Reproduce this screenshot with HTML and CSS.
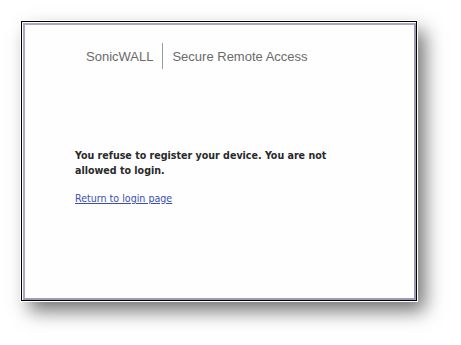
FILE: index.html
```html
<!DOCTYPE html>
<html lang="en">
<head>
    <meta charset="UTF-8">
    <title>SonicWALL - Secure Remote Access</title>
    <link rel="stylesheet" href="styles.css">
</head>
<body>
    <div class="window">
        <div class="pane">
            <div class="brand">
                <span class="brand-name">SonicWALL</span>
                <span class="brand-sep"></span>
                <span class="brand-product">Secure Remote Access</span>
            </div>
            <div class="message">
                <p class="notice">You refuse to register your device. You are not allowed to login.</p>
                <a class="back-link" href="#">Return to login page</a>
            </div>
        </div>
    </div>
</body>
</html>
```

FILE: styles.css
```css
html {
    height: 100%;
}
body {
    margin: 0;
    min-height: 100%;
    box-sizing: border-box;
    padding: 21px 0 0 21px;
    background: #fff;
}
.window {
    width: 394px;
    height: 278px;
    border: 1px solid #000;
    background: #fff;
    box-shadow: 0 0 0 1px #fff, 8px 10px 18px rgba(0, 0, 0, 0.55);
}
.pane {
    height: 277px;
    box-sizing: border-box;
    margin-left: 1px;
    margin-top: 1px;
    border-left: 2px solid #a8a8c2;
    border-top: 2px solid #a8a8c2;
    border-right: 2px solid #9c9cb6;
    border-bottom: 2px solid #9c9cb6;
    background: #fefefe;
    padding: 18px 0 0 50px;
}
.brand {
    display: flex;
    align-items: center;
    gap: 9px;
    padding-left: 11px;
    font-family: "Liberation Sans", Arial, sans-serif;
    font-size: 13px;
    color: #6a6a6a;
}
.brand-sep {
    width: 1px;
    height: 26px;
    background: #9a9a9a;
}
.message {
    padding-top: 79px;
    font-family: "DejaVu Sans Condensed", "DejaVu Sans", sans-serif;
    font-size: 10.6px;
}
.notice {
    margin: 0;
    width: 270px;
    font-weight: bold;
    line-height: 15px;
    color: #2a2a2a;
}
.back-link {
    display: inline-block;
    margin-top: 14px;
    color: #3a4fb0;
}
```
